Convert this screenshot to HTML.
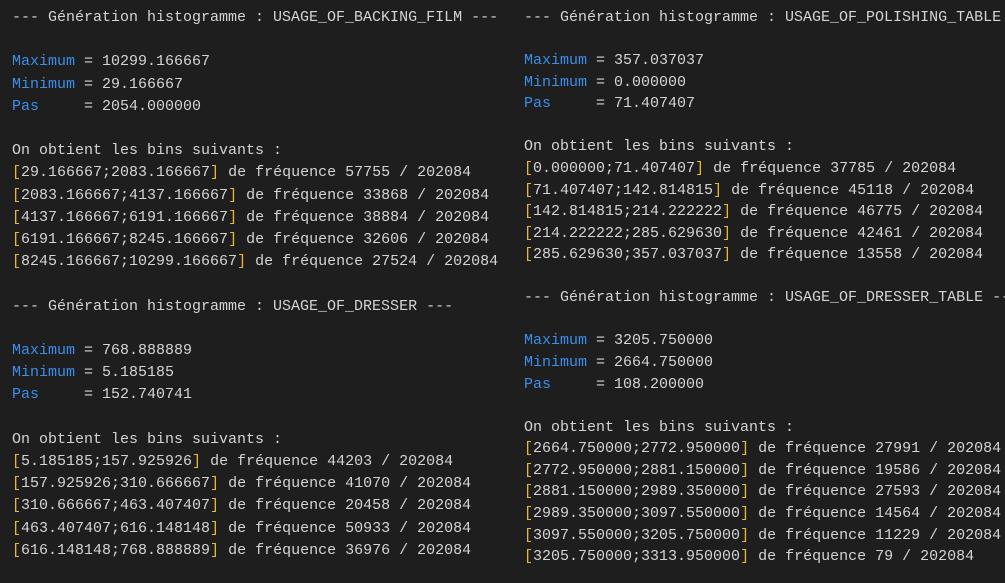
<!DOCTYPE html>
<html><head><meta charset="utf-8"><style>
html,body{margin:0;padding:0;background:#1e1e1e;width:1005px;height:583px;overflow:hidden}
.c{position:absolute;top:7px;font-family:"Liberation Mono",monospace;font-size:15px;color:#d4d4d4;white-space:pre;margin:0}
#l{left:12px;line-height:22.2px}
#r{left:524px;line-height:21.56px}
.b{color:#3b8eea}.y{color:#e5b83b}
</style></head><body>
<pre class="c" id="l">--- Génération histogramme : USAGE_OF_BACKING_FILM ---

<span class="b">Maximum</span> = 10299.166667
<span class="b">Minimum</span> = 29.166667
<span class="b">Pas</span>     = 2054.000000

On obtient les bins suivants :
<span class="y">[</span>29.166667;2083.166667<span class="y">]</span> de fréquence 57755 / 202084
<span class="y">[</span>2083.166667;4137.166667<span class="y">]</span> de fréquence 33868 / 202084
<span class="y">[</span>4137.166667;6191.166667<span class="y">]</span> de fréquence 38884 / 202084
<span class="y">[</span>6191.166667;8245.166667<span class="y">]</span> de fréquence 32606 / 202084
<span class="y">[</span>8245.166667;10299.166667<span class="y">]</span> de fréquence 27524 / 202084

--- Génération histogramme : USAGE_OF_DRESSER ---

<span class="b">Maximum</span> = 768.888889
<span class="b">Minimum</span> = 5.185185
<span class="b">Pas</span>     = 152.740741

On obtient les bins suivants :
<span class="y">[</span>5.185185;157.925926<span class="y">]</span> de fréquence 44203 / 202084
<span class="y">[</span>157.925926;310.666667<span class="y">]</span> de fréquence 41070 / 202084
<span class="y">[</span>310.666667;463.407407<span class="y">]</span> de fréquence 20458 / 202084
<span class="y">[</span>463.407407;616.148148<span class="y">]</span> de fréquence 50933 / 202084
<span class="y">[</span>616.148148;768.888889<span class="y">]</span> de fréquence 36976 / 202084</pre>
<pre class="c" id="r">--- Génération histogramme : USAGE_OF_POLISHING_TABLE ---

<span class="b">Maximum</span> = 357.037037
<span class="b">Minimum</span> = 0.000000
<span class="b">Pas</span>     = 71.407407

On obtient les bins suivants :
<span class="y">[</span>0.000000;71.407407<span class="y">]</span> de fréquence 37785 / 202084
<span class="y">[</span>71.407407;142.814815<span class="y">]</span> de fréquence 45118 / 202084
<span class="y">[</span>142.814815;214.222222<span class="y">]</span> de fréquence 46775 / 202084
<span class="y">[</span>214.222222;285.629630<span class="y">]</span> de fréquence 42461 / 202084
<span class="y">[</span>285.629630;357.037037<span class="y">]</span> de fréquence 13558 / 202084

--- Génération histogramme : USAGE_OF_DRESSER_TABLE ---

<span class="b">Maximum</span> = 3205.750000
<span class="b">Minimum</span> = 2664.750000
<span class="b">Pas</span>     = 108.200000

On obtient les bins suivants :
<span class="y">[</span>2664.750000;2772.950000<span class="y">]</span> de fréquence 27991 / 202084
<span class="y">[</span>2772.950000;2881.150000<span class="y">]</span> de fréquence 19586 / 202084
<span class="y">[</span>2881.150000;2989.350000<span class="y">]</span> de fréquence 27593 / 202084
<span class="y">[</span>2989.350000;3097.550000<span class="y">]</span> de fréquence 14564 / 202084
<span class="y">[</span>3097.550000;3205.750000<span class="y">]</span> de fréquence 11229 / 202084
<span class="y">[</span>3205.750000;3313.950000<span class="y">]</span> de fréquence 79 / 202084</pre>
</body></html>
